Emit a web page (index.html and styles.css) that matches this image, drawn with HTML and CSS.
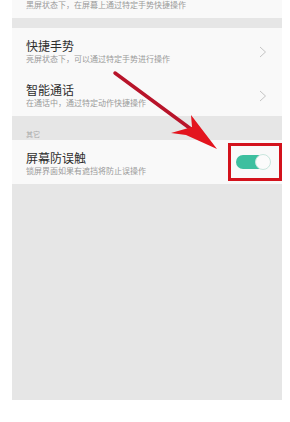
FILE: index.html
```html
<!DOCTYPE html>
<html lang="zh-CN">
<head>
    <meta charset="UTF-8">
    <meta name="viewport" content="width=device-width, initial-scale=1.0">
    <title>手势与体感</title>
    <link rel="stylesheet" href="styles.css">
</head>
<body>
    <div class="screen">
        <div class="row row-cut">
            <div class="row-sub">黑屏状态下，在屏幕上通过特定手势快捷操作</div>
        </div>
        <div class="gap"></div>
        <div class="row">
            <div class="row-text">
                <div class="row-title">快捷手势</div>
                <div class="row-sub">亮屏状态下，可以通过特定手势进行操作</div>
            </div>
            <svg class="chevron" width="8" height="12" viewBox="0 0 8 12"><path d="M1 1 L6.5 6 L1 11" fill="none" stroke="#c4c4c4" stroke-width="1"/></svg>
        </div>
        <div class="row">
            <div class="row-text">
                <div class="row-title">智能通话</div>
                <div class="row-sub">在通话中，通过特定动作快捷操作</div>
            </div>
            <svg class="chevron" width="8" height="12" viewBox="0 0 8 12"><path d="M1 1 L6.5 6 L1 11" fill="none" stroke="#c4c4c4" stroke-width="1"/></svg>
        </div>
        <div class="section-head">其它</div>
        <div class="row">
            <div class="row-text">
                <div class="row-title">屏幕防误触</div>
                <div class="row-sub">锁屏界面如果有遮挡将防止误操作</div>
            </div>
            <div class="switch on"><span class="knob"></span></div>
        </div>
        <div class="mark-box"></div>
    </div>

    <svg class="arrow" width="290" height="422" viewBox="0 0 290 422">
        <line x1="115" y1="73" x2="195" y2="132" stroke="#b8142a" stroke-width="3.5" stroke-linecap="round"/>
        <polygon points="217,149 191,115 192,127 171,133 186,135" fill="#e3141e"/>
    </svg>
</body>
</html>
```

FILE: styles.css
```css
body {
    margin: 0;
    background: #ffffff;
    font-family: "Noto Sans CJK SC", "Noto Sans", sans-serif;
}
.screen {
    position: relative;
    width: 270px;
    height: 400px;
    margin-left: 12px;
    background-color: #e6e6e6;
    overflow: hidden;
}
.row {
    display: flex;
    align-items: center;
    height: 44px;
    padding: 0 15px 0 14px;
    background-color: #f9f9f9;
}
.row-cut {
    height: 18px;
    align-items: flex-start;
}
.row-text {
    flex: 1;
    margin-top: 2px;
}
.row-title {
    font-size: 12px;
    line-height: 14px;
    color: #2e2e2e;
}
.row-sub {
    margin-top: 1px;
    font-size: 8px;
    line-height: 10px;
    color: #9a9a9a;
    white-space: nowrap;
}
.row-cut .row-sub {
    margin-top: 0;
}
.gap {
    height: 10px;
}
.chevron {
    display: block;
    margin-top: 4px;
}
.section-head {
    height: 24px;
    padding: 13px 0 0 14px;
    box-sizing: border-box;
    font-size: 7px;
    line-height: 10px;
    color: #a8a8a8;
}
.switch {
    position: relative;
    width: 34px;
    height: 14px;
    margin-right: -3px;
    border-radius: 7px;
    background-color: #e0e0e0;
}
.switch.on {
    background-color: #3dbf9f;
}
.knob {
    position: absolute;
    right: -1px;
    top: -1px;
    width: 16px;
    height: 16px;
    box-sizing: border-box;
    border-radius: 50%;
    background: #fbfbfb;
    border: 1px solid #c9e6de;
}
.mark-box {
    position: absolute;
    left: 216px;
    top: 143px;
    width: 54px;
    height: 38px;
    box-sizing: border-box;
    border: 3px solid #d3121c;
}
.arrow {
    position: absolute;
    left: 0;
    top: 0;
    pointer-events: none;
}
```
